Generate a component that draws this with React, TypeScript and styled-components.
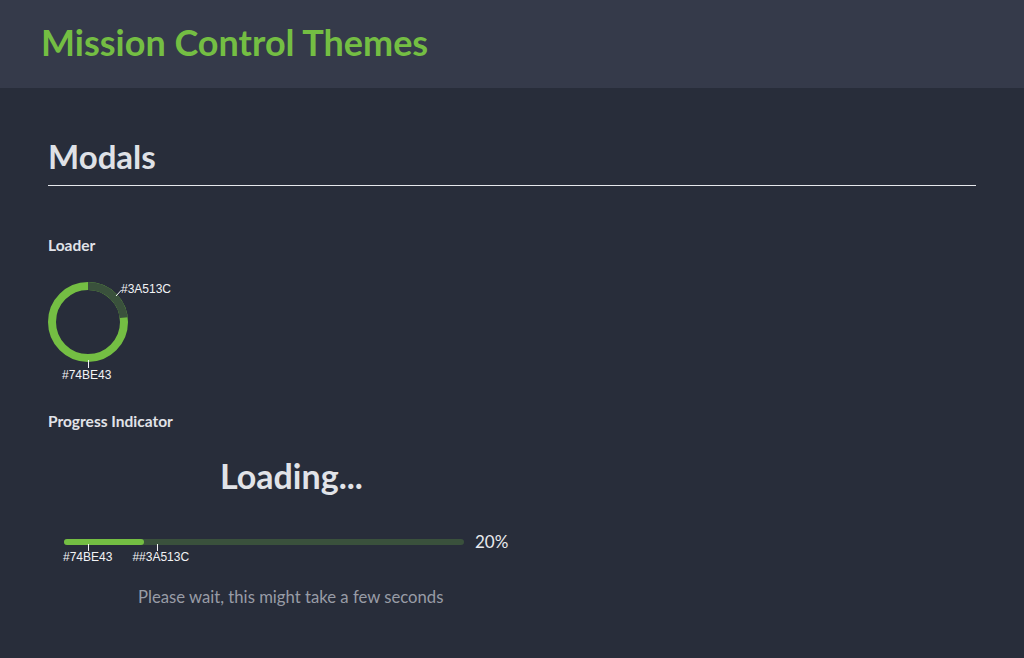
import React from "react";
import styled, { createGlobalStyle } from "styled-components";

const Global = createGlobalStyle`
  html, body { margin: 0; padding: 0; background: #282d3a; }
  body { font-family: Lato, "Open Sans", sans-serif; color: #e1e3e8; }
`;

const Page = styled.div`
  min-height: 658px;
  background: #282d3a;
  display: flex;
  flex-direction: column;
`;

const Header = styled.header`
  height: 88px;
  background: #353a4a;
  display: flex;
  align-items: center;
  padding: 0 0 4px 41px;
  box-sizing: border-box;
`;

const Title = styled.h1`
  margin: 0;
  font-size: 36px;
  font-weight: 700;
  color: #74be43;
  line-height: 44px;
`;

const Main = styled.main`
  padding: 48px 48px 0 48px;
  display: flex;
  flex-direction: column;
`;

const SectionTitle = styled.h2`
  margin: 0;
  font-size: 33px;
  font-weight: 700;
  color: #dfe1e6;
  line-height: 40px;
  padding-bottom: 9px;
  border-bottom: 1px solid #e6e8ec;
`;

const Section = styled.section<{ $top: number }>`
  margin-top: ${(p) => p.$top}px;
  display: flex;
  flex-direction: column;
`;

const Label = styled.h3`
  margin: 0;
  font-size: 15.5px;
  font-weight: 700;
  color: #e1e3e8;
  line-height: 20px;
`;

const DonutFigure = styled.figure`
  margin: 27px 0 0 0;
  position: relative;
  width: 160px;
  height: 100px;
`;

const Annotation = styled.span`
  font-size: 12px;
  font-family: "Liberation Sans", Arial, sans-serif;
  color: #f2f3f5;
  line-height: 14px;
  white-space: nowrap;
`;

const DonutTop = styled(Annotation)`
  position: absolute;
  left: 73px;
  top: 0px;
`;

const DonutBottom = styled(Annotation)`
  position: absolute;
  left: 14px;
  top: 86px;
`;

const Loading = styled.div`
  margin: 25px 0 0 172px;
  font-size: 34px;
  font-weight: 700;
  color: #e1e3e8;
  line-height: 40px;
`;

const BarRow = styled.div`
  margin: 38px 0 0 16px;
  display: flex;
  align-items: center;
  gap: 11px;
`;

const Track = styled.div`
  width: 400px;
  height: 6px;
  border-radius: 3px;
  background: #3a513c;
  position: relative;
`;

const Fill = styled.div`
  height: 100%;
  border-radius: 3px;
  background: #74be43;
`;

const Tick = styled.span<{ $x: number }>`
  position: absolute;
  left: ${(p) => p.$x}px;
  top: 5px;
  width: 1px;
  height: 7px;
  background: #f2f3f5;
`;

const Percent = styled.span`
  font-size: 17px;
  color: #e8eaee;
  line-height: 16px;
`;

const BarLabels = styled.div`
  display: flex;
  gap: 20px;
  margin: 0 0 0 15px;
  line-height: 14px;
`;

const Wait = styled.p`
  margin: 23px 0 0 90px;
  font-size: 16.7px;
  color: #989ca6;
  line-height: 20px;
`;

export default function App() {
  const pct = 20;
  const r = 36;
  const c = 2 * Math.PI * r;
  const darkFrac = 0.23;
  return (
    <Page>
      <Global />
      <Header>
        <Title>Mission Control Themes</Title>
      </Header>
      <Main>
        <SectionTitle>Modals</SectionTitle>
        <Section $top={49}>
          <Label>Loader</Label>
          <DonutFigure>
            <svg width="160" height="100" viewBox="0 0 160 100">
              <g transform="translate(40 40) rotate(-90)">
                <circle cx="0" cy="0" r={r} fill="none" stroke="#74be43" strokeWidth="8" />
                <circle
                  cx="0"
                  cy="0"
                  r={r}
                  fill="none"
                  stroke="#3a513c"
                  strokeWidth="8"
                  strokeDasharray={`${c * darkFrac} ${c}`}
                />
              </g>
              <line x1="68" y1="14" x2="73.5" y2="8" stroke="#f2f3f5" strokeWidth="1" />
              <line x1="40.5" y1="78" x2="40.5" y2="86" stroke="#f2f3f5" strokeWidth="1" />
            </svg>
            <DonutTop>#3A513C</DonutTop>
            <DonutBottom>#74BE43</DonutBottom>
          </DonutFigure>
        </Section>
        <Section $top={29}>
          <Label>Progress Indicator</Label>
          <Loading>Loading...</Loading>
          <BarRow>
            <Track>
              <Fill style={{ width: `${pct}%` }} />
              <Tick $x={24} />
              <Tick $x={93} />
            </Track>
            <Percent>{pct}%</Percent>
          </BarRow>
          <BarLabels>
            <Annotation>#74BE43</Annotation>
            <Annotation>##3A513C</Annotation>
          </BarLabels>
          <Wait>Please wait, this might take a few seconds</Wait>
        </Section>
      </Main>
    </Page>
  );
}
